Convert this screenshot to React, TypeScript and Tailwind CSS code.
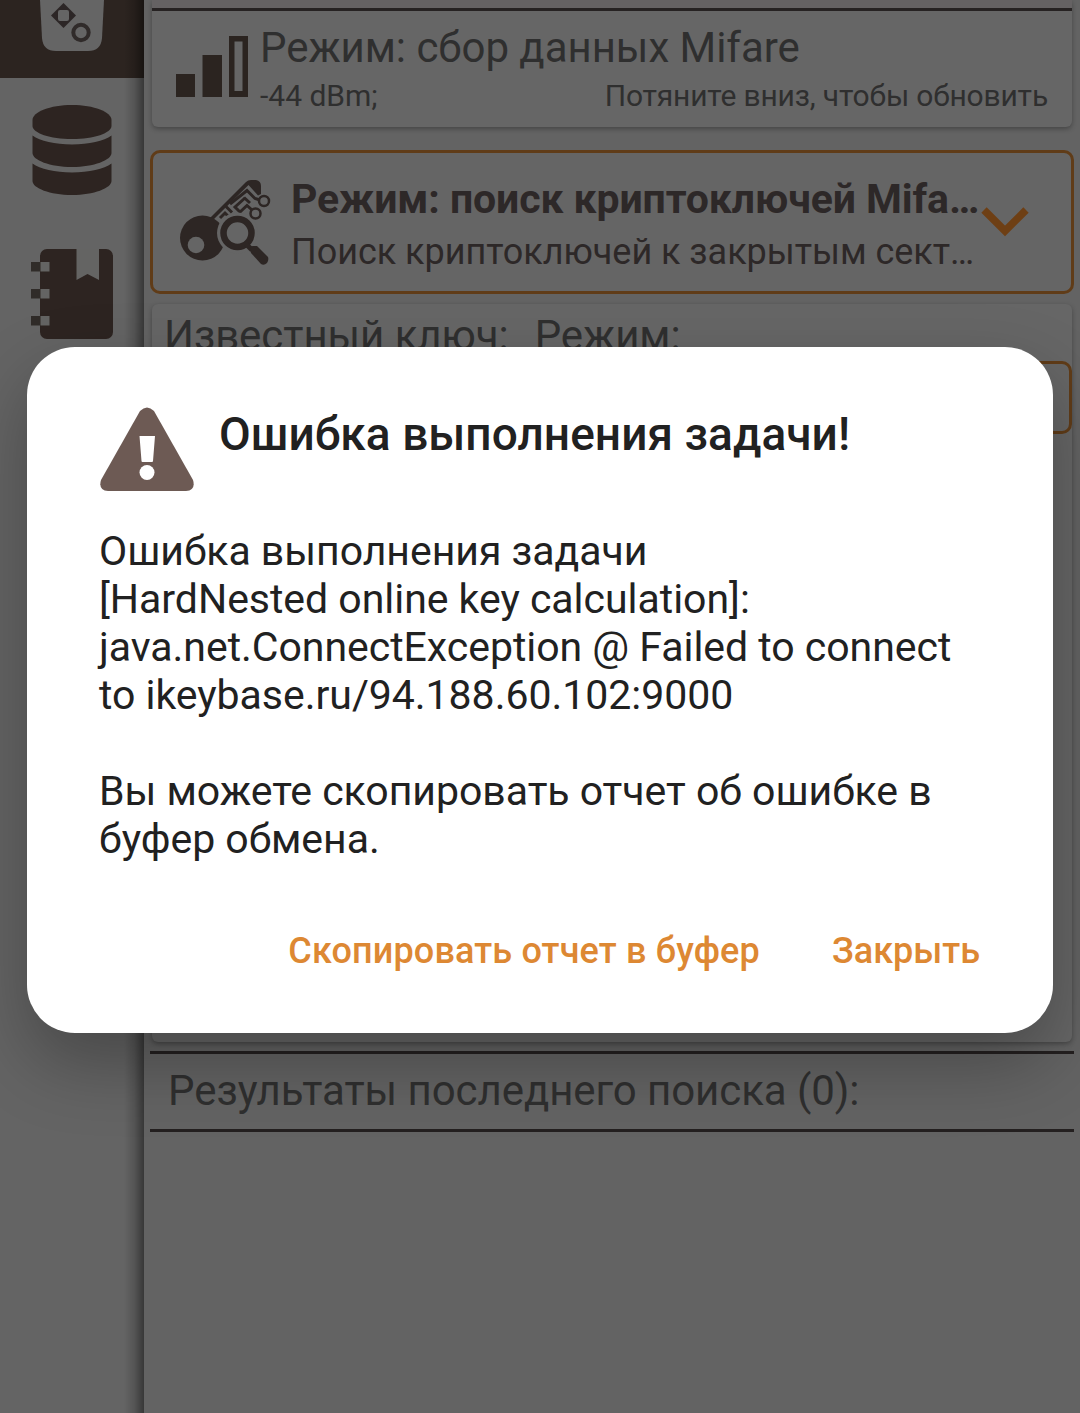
function DiceIcon() {
  return (
    <svg className="w-16 h-[51px]" viewBox="0 0 64 51">
      <path d="M0 0H64L62 38Q61 51 48 51H16Q3 51 2 38Z" fill="#656565" />
      <path d="M23.500 3L36 15.500L23.500 28L11 15.500Z" fill="#2c2626" />
      <rect x="18" y="10" width="11" height="11" rx="2" fill="#656565" />
      <circle cx="41" cy="32.500" r="7.700" fill="none" stroke="#302b2a" strokeWidth="4" />
    </svg>
  );
}

function DatabaseIcon() {
  return (
    <svg className="w-20 h-[90px]" viewBox="0 0 80 90" fill="#2d2421">
      <path d="M.5 15C.5 7 18 0 40 0S79.500 7 79.500 15V21C79.500 28 62 34 40 34S.5 28 .5 21Z" />
      <path d="M.5 30.500C8 36 23 39.500 40 39.500S72 36 79.500 30.500V48C79.500 55 62 62 40 62S.5 55 .5 48Z" />
      <path d="M.5 58.500C8 64 23 67.500 40 67.500S72 64 79.500 58.500V76C79.500 83 62 90 40 90S.5 83 .5 76Z" />
    </svg>
  );
}

function NotebookIcon() {
  return (
    <svg className="w-[82px] h-[90px]" viewBox="0 0 82 90">
      <rect x="9" width="73" height="90" rx="7" fill="#2d2421" />
      <path d="M45.500 0H68V31L56.500 25L45.500 31Z" fill="#646463" />
      {[13, 40, 67].map((y) => (
        <g key={y}>
          <rect y={y} width="9.500" height="9.500" fill="#302c29" />
          <rect x="9.500" y={y} width="9" height="9.500" fill="#646463" />
        </g>
      ))}
    </svg>
  );
}

function SignalIcon() {
  return (
    <svg className="w-[72px] h-[61px] shrink-0" viewBox="0 0 72 61" fill="#2b2420">
      <path d="M0 38H19V61H0Z" />
      <path d="M26.500 19H46V61H26.500Z" />
      <path fillRule="evenodd" d="M53 0H72V61H53ZM58.500 5.500V55H66.500V5.500Z" />
    </svg>
  );
}

function KeySearchIcon() {
  return (
    <svg className="w-[92px] h-[86px] shrink-0" viewBox="0 0 92 86">
      <path d="M29 39L66 2Q68 0 71 0H76Q81 1 81 6V14L78 15.500L68.500 5L34 39Z" fill="#2d2624" />
      <g fill="none" stroke="#2d2624" strokeWidth="3">
        <path d="M40 38L45 33L50 38" />
        <path d="M46 26.500L52 32.500" />
        <path d="M50 24L67 10.500L75 18.500L80 20" />
        <path d="M65 18L55 27L60 32L67 25.500L72 30" />
        <path d="M64 17.500L70 23" />
      </g>
      <circle cx="22.500" cy="58" r="22.500" fill="#2d2624" />
      <circle cx="16" cy="65" r="8.300" fill="#656565" />
      <circle cx="57.500" cy="53" r="20.500" fill="#656565" />
      <circle cx="57.500" cy="53" r="14" fill="none" stroke="#2d2624" strokeWidth="6.500" />
      <path d="M66 64L72 70" stroke="#2d2624" strokeWidth="5" />
      <path d="M70 69Q70 66 73 66H77L88 77Q89 80 87 83Q84 86 81 84L71 73Z" fill="#2d2624" />
      <circle cx="75.500" cy="33.500" r="5" fill="#656565" stroke="#2d2624" strokeWidth="2.500" />
      <circle cx="84" cy="21" r="5" fill="#656565" stroke="#2d2624" strokeWidth="2.500" />
    </svg>
  );
}

function WarningIcon() {
  return (
    <svg className="w-[94px] h-[84px] shrink-0" viewBox="0 0 94 84">
      <path d="M40 4Q47 -3 54 4L93 73Q96 83 86 84H8Q-2 83 1 73Z" fill="#6d5a54" />
      <path d="M39.500 29H55L53 54Q53 55 52 55H42.500Q41.500 55 41.500 54Z" fill="#fff" />
      <circle cx="47" cy="65.500" r="7.500" fill="#fff" />
    </svg>
  );
}

function Sidebar() {
  return (
    <aside className="relative flex w-36 shrink-0 flex-col items-center bg-[#646464]">
      <div className="flex h-[78px] w-full justify-center bg-[#2c2420]">
        <DiceIcon />
      </div>
      <div className="mt-[27px]">
        <DatabaseIcon />
      </div>
      <div className="mt-[54px]">
        <NotebookIcon />
      </div>
      <div className="absolute inset-y-0 right-0 w-5 bg-linear-to-r from-transparent via-black/15 to-black/45" />
    </aside>
  );
}

function Dialog() {
  return (
    <div className="absolute top-[347px] left-[27px] flex h-[686px] w-[1026px] flex-col rounded-[48px] bg-white px-[72px] pt-[60px] text-[#212121] shadow-[0_30px_70px_rgba(0,0,0,0.28)]">
      <div className="ml-px flex h-[84px]">
        <WarningIcon />
        <h1 className="ml-[25px] text-[46px] leading-[54px] font-medium tracking-[0.05px] whitespace-nowrap">Ошибка выполнения задачи!</h1>
      </div>
      <div className="mt-9 text-[41px] leading-[48px] tracking-[-0.03px] whitespace-nowrap">
        <p>Ошибка выполнения задачи</p>
        <p>[HardNested online key calculation]:</p>
        <p>java.net.ConnectException @ Failed to connect</p>
        <p>to ikeybase.ru/94.188.60.102:9000</p>
        <p className="mt-12">Вы можете скопировать отчет об ошибке в</p>
        <p>буфер обмена.</p>
      </div>
      <div className="mt-16 mr-px flex justify-end gap-[72px] text-[36px] leading-[48px] font-medium whitespace-nowrap text-[#dd8833]">
        <button className="tracking-[0.16px]">Скопировать отчет в буфер</button>
        <button>Закрыть</button>
      </div>
    </div>
  );
}

export default function App() {
  return (
    <div className="relative flex h-[1413px] w-[1080px] overflow-hidden bg-[#636363] font-['Roboto',sans-serif] text-[#2f2f2f]">
      <Sidebar />
      <main className="flex w-[936px] flex-col px-1.5">
        <section className="mx-0.5 h-[127px] shrink-0 rounded-b-md bg-[#666] shadow-[0_2px_5px_rgba(0,0,0,0.3)]">
          <div className="h-[11px] border-b-3 border-[#262222] bg-[#656263]" />
          <div className="flex pt-[25px] pl-6">
            <SignalIcon />
            <div className="ml-3 -mt-[13px] w-[788px] whitespace-nowrap">
              <div className="text-[42px] leading-[49px] tracking-[-0.04px]">Режим: сбор данных Mifare</div>
              <div className="flex justify-between text-[30px] leading-[48px]">
                <span>-44 dBm;</span>
                <span className="tracking-[-0.17px]">Потяните вниз, чтобы обновить</span>
              </div>
            </div>
          </div>
        </section>
        <section className="mt-[23px] flex h-36 shrink-0 rounded-[10px] border-3 border-[#603c18] bg-[#656565] pt-[27px] pl-[27px]">
          <KeySearchIcon />
          <div className="ml-[19px] -mt-[6px] w-[688px] whitespace-nowrap text-[#2d2828]">
            <div className="text-[41px] leading-[51px] font-bold tracking-[-0.1px]">Режим: поиск криптоключей Mifa…</div>
            <div className="text-[36px] leading-[54px] tracking-[-0.03px]">Поиск криптоключей к закрытым сект…</div>
          </div>
          <svg className="mt-[26px] ml-px h-[32px] w-[50px]" viewBox="0 0 50 32">
            <path d="M4 4L25 25L46 4" fill="none" stroke="#6e3f14" strokeWidth="7.500" />
          </svg>
        </section>
        <section className="mx-0.5 mt-[10px] h-[738px] shrink-0 rounded-md bg-[#666] shadow-[0_2px_5px_rgba(0,0,0,0.3)]">
          <div className="flex h-[57px] gap-[26px] pt-[7px] pl-3 text-[42px] leading-[49px] tracking-[-0.06px] whitespace-nowrap">
            <span>Известный ключ:</span>
            <span>Режим:</span>
          </div>
          <div className="ml-2 h-[73px] rounded-[10px] border-3 border-[#603c18]" />
        </section>
        <div className="mt-[9px] h-[81px] shrink-0 border-y-3 border-[#242020] pt-[12px] pl-[18px] text-[42px] leading-[49px] tracking-[-0.06px] whitespace-nowrap">
          Результаты последнего поиска (0):
        </div>
      </main>
      <Dialog />
    </div>
  );
}
